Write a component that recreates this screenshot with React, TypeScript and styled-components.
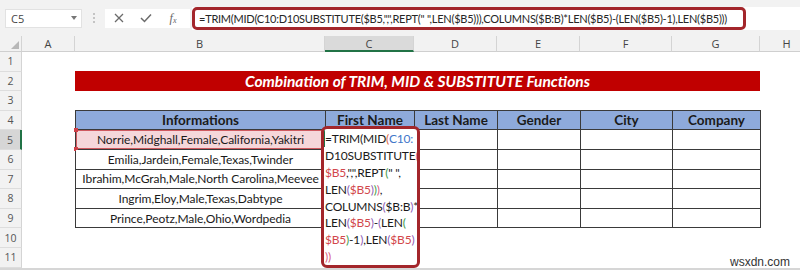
import React from 'react';
import styled, { createGlobalStyle } from 'styled-components';

const GlobalStyle = createGlobalStyle`
  html, body { margin: 0; padding: 0; background: #fff; }
  body { font-family: Lato, "Liberation Sans", sans-serif; overflow: hidden; }
  * { box-sizing: border-box; }
`;

const ACCENT = '#a3262b';
const GREEN = '#217346';

const Window = styled.div`
  width: 800px;
  height: 274px;
  position: relative;
  overflow: hidden;
  background: #fff;
  display: flex;
  flex-direction: column;
`;

const FormulaBar = styled.div`
  height: 36px;
  flex: none;
  background: #f2f2f2;
  display: flex;
  align-items: center;
  padding-left: 5px;
`;

const NameBox = styled.div`
  width: 77px;
  height: 19px;
  background: #fff;
  border: 1px solid #e2e2e2;
  display: flex;
  align-items: center;
  justify-content: space-between;
  padding: 0 4px 0 5px;
  font-family: "Open Sans", sans-serif;
  font-size: 11px;
  color: #444;
`;

const Caret = styled.span`
  width: 0;
  height: 0;
  border-left: 3px solid transparent;
  border-right: 3px solid transparent;
  border-top: 4px solid #777;
`;

const Dots = styled.div`
  width: 6px;
  margin-left: 9px;
  display: flex;
  flex-direction: column;
  align-items: center;
  gap: 2px;
  & > span { width: 2px; height: 2px; background: #b5b5b5; border-radius: 1px; }
`;

const FxBox = styled.div`
  margin-left: 8px;
  width: 85px;
  height: 19px;
  background: #fff;
  display: flex;
  align-items: center;
  gap: 5px;
  padding-left: 3px;
`;

const IconSlot = styled.div`
  width: 22px;
  height: 19px;
  display: flex;
  align-items: center;
  justify-content: center;
  color: #6b6b6b;
`;

const FxLabel = styled.span`
  font-family: "Liberation Serif", serif;
  font-style: italic;
  font-size: 12px;
  color: #666;
  & > sub { font-size: 8px; vertical-align: -1px; }
`;

const FormulaInput = styled.div`
  flex: 1;
  margin-left: 2px;
  height: 23px;
  background: #fff;
  display: flex;
  align-items: center;
`;

const FormulaHighlight = styled.div`
  width: 554px;
  height: 23px;
  border: 3px solid ${ACCENT};
  border-radius: 5px;
  padding-left: 4px;
  display: flex;
  align-items: center;
  font-family: Lato, sans-serif;
  font-size: 11px;
  letter-spacing: -0.25px;
  color: #262626;
  white-space: nowrap;
  overflow: hidden;
`;

const Sheet = styled.div`
  flex: 1;
  display: grid;
  grid-template-columns: 22px 53px 250px 89px 83px 83px 92px 88px 54px;
  grid-template-rows: 16px repeat(11, 19.6px) 1fr;
  position: relative;
`;

const Corner = styled.div`
  grid-column: 1;
  grid-row: 1;
  background: #f2f2f2;
  border-right: 1px solid #d4d4d4;
  border-bottom: 1px solid #cfcfcf;
  position: relative;
  &::after {
    content: '';
    position: absolute;
    right: 2px;
    bottom: 2px;
    width: 0;
    height: 0;
    border-left: 8px solid transparent;
    border-bottom: 8px solid #b8b8b8;
  }
`;

const ColHead = styled.div<{ $active?: boolean; $col: number }>`
  grid-column: ${(p) => p.$col};
  grid-row: 1;
  background: ${(p) => (p.$active ? '#dadada' : '#f2f2f2')};
  border-right: 1px solid #d4d4d4;
  border-bottom: ${(p) => (p.$active ? `2px solid ${GREEN}` : '1px solid #cfcfcf')};
  display: flex;
  align-items: center;
  justify-content: center;
  font-family: "Open Sans", sans-serif;
  font-size: 11px;
  color: #444;
`;

const RowHead = styled.div<{ $active?: boolean; $row: number }>`
  grid-column: 1;
  grid-row: ${(p) => p.$row};
  background: ${(p) => (p.$active ? '#d6d6d6' : '#f2f2f2')};
  border-right: ${(p) => (p.$active ? `2px solid ${GREEN}` : '1px solid #d4d4d4')};
  border-bottom: 1px solid #dddddd;
  display: flex;
  align-items: center;
  justify-content: center;
  font-family: "Open Sans", sans-serif;
  font-size: 10.5px;
  color: #555;
`;

const BottomStrip = styled.div`
  grid-column: 1 / -1;
  grid-row: 13;
  border-top: 2px solid #d6d6d6;
`;

const Title = styled.div`
  grid-column: 3 / 9;
  grid-row: 3;
  background: #c00000;
  color: #fff;
  font-weight: 700;
  font-style: italic;
  font-size: 15.5px;
  display: flex;
  align-items: center;
  justify-content: center;
  margin-top: -1px;
`;

const Table = styled.div`
  grid-column: 3 / 9;
  grid-row: 5 / 11;
  display: grid;
  grid-template-columns: 249px 88px 82px 82px 91px 87px;
  grid-template-rows: repeat(6, 1fr);
  gap: 1px;
  padding: 1px;
  background: #3a3a3a;
  width: 686px;
  margin-top: -1px;
`;

const Cell = styled.div<{ $head?: boolean; $ref?: boolean }>`
  background: ${(p) => (p.$head ? '#8eaadb' : p.$ref ? '#f5d7da' : '#fff')};
  box-shadow: ${(p) => (p.$ref ? 'inset 0 1px 0 #cf5a60, inset 0 -1px 0 #cf5a60, inset 1px 0 0 #cf5a60' : 'none')};
  font-weight: ${(p) => (p.$head ? 700 : 400)};
  font-size: ${(p) => (p.$head ? '13.5px' : '12px')};
  letter-spacing: ${(p) => (p.$head ? '0' : '-0.05px')};
  color: #1a1a1a;
  display: flex;
  align-items: center;
  justify-content: center;
  white-space: nowrap;
  position: relative;
`;

const Handle = styled.span<{ $top?: boolean }>`
  position: absolute;
  left: -2px;
  ${(p) => (p.$top ? 'top: -2px;' : 'bottom: -2px;')}
  width: 4px;
  height: 4px;
  background: #cf4048;
`;

const Editor = styled.div`
  grid-column: 4;
  grid-row: 6 / 13;
  margin: -4px -6px 0 -4px;
  z-index: 2;
  background: #fff;
  border: 3px solid ${ACCENT};
  border-radius: 6px;
  padding: 2px 0 0 1px;
  font-size: 12px;
  letter-spacing: -0.2px;
  line-height: 16.8px;
  color: #1a1a1a;
  white-space: nowrap;
  overflow: hidden;
  position: relative;
  &::before {
    content: '';
    position: absolute;
    left: 0;
    top: 1px;
    width: 1px;
    height: 17px;
    background: ${GREEN};
  }
`;

const Line = styled.div``;

const Tok = styled.span<{ $c: string }>`
  color: ${(p) => p.$c};
`;

const Watermark = styled.div`
  position: absolute;
  right: 10px;
  bottom: 5px;
  font-family: "Liberation Sans", Arial, sans-serif;
  font-size: 12px;
  color: #333;
  z-index: 3;
`;

const C = {
  k: '#1a1a1a',
  blue: '#3f78c9',
  red: '#d2474c',
  orange: '#e0673c',
  pink: '#d8607f',
  green: '#3f9a49',
  purple: '#8e5cb6',
};

type T = [string, string];

const editorLines: T[][] = [
  [['=TRIM(MID', C.k], ['(', C.orange], ['C10:', C.blue]],
  [['D10SUBSTITUTE', C.k], ['(', C.pink]],
  [['$B5', C.red], [',",",REPT', C.k], ['(', C.green], ['" ",', C.k]],
  [['LEN', C.k], ['(', C.purple], ['$B5', C.red], [')', C.purple], [')', C.green], [')', C.pink], [',', C.k]],
  [['COLUMNS', C.k], ['(', C.purple], ['$B:B', C.k], [')', C.purple], ['*', C.k]],
  [['LEN', C.k], ['(', C.purple], ['$B5', C.red], [')', C.purple], ['-', C.k], ['(', C.purple], ['LEN', C.k], ['(', C.green]],
  [['$B5', C.red], [')', C.green], ['-1', C.k], [')', C.purple], [',LEN', C.k], ['(', C.purple], ['$B5', C.red], [')', C.purple]],
  [['))', C.pink]],
];

const headers = ['Informations', 'First Name', 'Last Name', 'Gender', 'City', 'Company'];
const data = [
  'Norrie,Midghall,Female,California,Yakitri',
  'Emilia,Jardein,Female,Texas,Twinder',
  'Ibrahim,McGrah,Male,North Carolina,Meevee',
  'Ingrim,Eloy,Male,Texas,Dabtype',
  'Prince,Peotz,Male,Ohio,Wordpedia',
];

const cols = ['A', 'B', 'C', 'D', 'E', 'F', 'G', 'H'];

const formula =
  '=TRIM(MID(C10:D10SUBSTITUTE($B5,",",REPT(" ",LEN($B5))),COLUMNS($B:B)*LEN($B5)-(LEN($B5)-1),LEN($B5)))';

export default function App() {
  return (
    <Window>
      <GlobalStyle />
      <FormulaBar>
        <NameBox>
          <span>C5</span>
          <Caret />
        </NameBox>
        <Dots>
          <span />
          <span />
          <span />
        </Dots>
        <FxBox>
          <IconSlot>
            <svg width="10" height="10" viewBox="0 0 10 10">
              <path d="M1 1 L9 9 M9 1 L1 9" stroke="#6b6b6b" strokeWidth="1.3" fill="none" />
            </svg>
          </IconSlot>
          <IconSlot>
            <svg width="12" height="10" viewBox="0 0 12 10">
              <path d="M1 5 L4.5 8.5 L11 1.5" stroke="#6b6b6b" strokeWidth="1.5" fill="none" />
            </svg>
          </IconSlot>
          <IconSlot>
            <FxLabel>
              f<sub>x</sub>
            </FxLabel>
          </IconSlot>
        </FxBox>
        <FormulaInput>
          <FormulaHighlight>{formula}</FormulaHighlight>
        </FormulaInput>
      </FormulaBar>
      <Sheet>
        <Corner />
        {cols.map((c, i) => (
          <ColHead key={c} $col={i + 2} $active={c === 'C'}>
            {c}
          </ColHead>
        ))}
        {Array.from({ length: 11 }, (_, i) => (
          <RowHead key={i} $row={i + 2} $active={i + 1 === 5}>
            {i + 1}
          </RowHead>
        ))}
        <Title>Combination of TRIM, MID &amp; SUBSTITUTE Functions</Title>
        <Table>
          {headers.map((h) => (
            <Cell key={h} $head>
              {h}
            </Cell>
          ))}
          {data.map((d, r) => (
            <React.Fragment key={d}>
              <Cell $ref={r === 0}>
                {d}
                {r === 0 && (
                  <>
                    <Handle $top />
                    <Handle />
                  </>
                )}
              </Cell>
              {Array.from({ length: 5 }, (_, k) => (
                <Cell key={k} />
              ))}
            </React.Fragment>
          ))}
        </Table>
        <Editor>
          {editorLines.map((ln, i) => (
            <Line key={i}>
              {ln.map(([t, c], j) => (
                <Tok key={j} $c={c}>
                  {t}
                </Tok>
              ))}
            </Line>
          ))}
        </Editor>
        <BottomStrip />
      </Sheet>
      <Watermark>wsxdn.com</Watermark>
    </Window>
  );
}
